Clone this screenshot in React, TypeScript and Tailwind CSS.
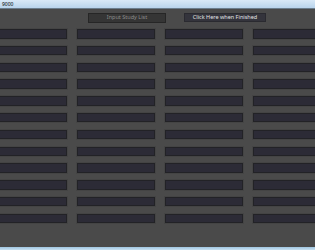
import React from "react";

const ROWS = 12;
const COLS = 4;

export default function App() {
  return (
    <div
      className="w-[315px] h-[250px] flex flex-col overflow-hidden bg-[#4a4a4a]"
      style={{ fontFamily: '"Noto Sans", "Open Sans", sans-serif' }}
    >
      <div className="h-[9px] shrink-0 bg-gradient-to-b from-[#d9e9f7] to-[#b9d4ec] border-b border-[#6b7d8c] flex items-center pl-[2px]">
        <span className="text-[5px] leading-none text-black">9000</span>
      </div>
      <div className="h-[20px] shrink-0 flex items-start pt-[4px]">
        <div className="ml-[88px] w-[78px] h-[10px] bg-[#353535] border border-[#262626] flex items-center justify-center">
          <span className="text-[5.5px] leading-none text-[#8c8c8c]">Input Study List</span>
        </div>
        <div className="ml-[18px] w-[82px] h-[9px] bg-[#34343c] border border-[#2a2a30] flex items-center justify-center">
          <span className="text-[5.5px] leading-none text-[#e4e4e4]">Click Here when Finished</span>
        </div>
      </div>
      <div className="flex gap-[10px] ml-[-11px]">
        {Array.from({ length: COLS }).map((_, c) => (
          <div key={c} className="w-[78px] shrink-0 flex flex-col gap-[7.3px]">
            {Array.from({ length: ROWS }).map((_, r) => (
              <div
                key={r}
                className="h-[9.5px] bg-[#2c2b36] border border-[#222226] shadow-[0_0_0_1px_#444]"
              />
            ))}
          </div>
        ))}
      </div>
      <div className="flex-1" />
      <div className="h-[3px] shrink-0 bg-gradient-to-b from-[#9fc5e0] to-[#c9e2f3]" />
    </div>
  );
}
